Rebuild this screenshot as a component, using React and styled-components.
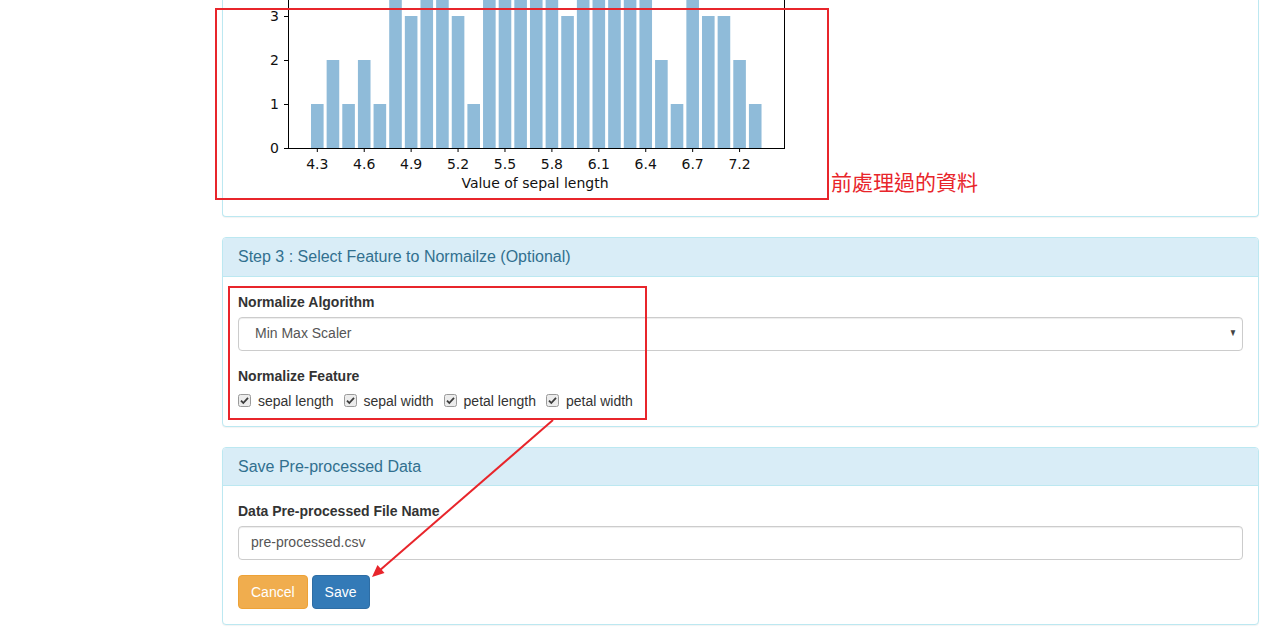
import React from "react";
import styled, { createGlobalStyle } from "styled-components";

const GlobalStyle = createGlobalStyle`
    html, body {
        margin: 0;
        padding: 0;
        background: #fff;
        overflow: hidden;
    }
    body {
        font-family: "Liberation Sans", Arial, Helvetica, sans-serif;
        font-size: 14px;
        line-height: 1.42857;
        color: #333;
    }
    * { box-sizing: border-box; }
`;

const Page = styled.div`
    position: relative;
    width: 1269px;
    height: 638px;
    padding: 0 10px 0 222px;
`;

const Panel = styled.div`
    background: #fff;
    border: 1px solid #bce8f1;
    border-radius: 4px;
    margin-bottom: 20px;
    box-shadow: 0 1px 1px rgba(0, 0, 0, 0.05);
    ${p => p.$cut && `
        border-top: none;
        border-radius: 0 0 4px 4px;
    `}
`;

const PanelHeading = styled.div`
    background: #d9edf7;
    color: #31708f;
    border-bottom: 1px solid #bce8f1;
    border-radius: 3px 3px 0 0;
    padding: 10px 15px;
    font-size: 16px;
    line-height: 1.1;
`;

const PanelBody = styled.div`
    padding: ${p => (p.$cut ? "0 15px 15px" : "15px")};
`;

const FormGroup = styled.div`
    margin-bottom: ${p => (p.$last ? 0 : 15)}px;
`;

const Label = styled.div`
    font-weight: bold;
    margin-bottom: 5px;
    line-height: 20px;
`;

const Field = styled.div`
    display: flex;
    align-items: center;
    justify-content: space-between;
    height: 34px;
    padding: 6px 12px 6px ${p => (p.$select ? 16 : 12)}px;
    border: 1px solid #ccc;
    border-radius: 4px;
    box-shadow: inset 0 1px 1px rgba(0, 0, 0, 0.075);
    color: #555;
    background: #fff;
`;

const Caret = styled.span`
    font-size: 10px;
    color: #444;
    margin-right: -8px;
    transform: scaleX(0.8);
`;

const CheckRow = styled.div`
    display: flex;
    align-items: center;
    height: 20px;
`;

const CheckLabel = styled.label`
    display: flex;
    align-items: center;
    margin-right: 10px;
    line-height: 20px;
    svg {
        margin-right: 7px;
    }
`;

const ButtonRow = styled.div`
    display: flex;
    gap: 4px;
`;

const Button = styled.button`
    font-family: inherit;
    font-size: 14px;
    line-height: 20px;
    height: 34px;
    padding: 6px 12px;
    border-radius: 4px;
    color: #fff;
    border: 1px solid ${p => (p.$variant === "warning" ? "#eea236" : "#2e6da4")};
    background: ${p => (p.$variant === "warning" ? "#f0ad4e" : "#337ab7")};
`;

const Overlay = styled.div`
    position: absolute;
    inset: 0;
    pointer-events: none;
`;

const RedBox = styled.div`
    position: absolute;
    left: ${p => p.$x}px;
    top: ${p => p.$y}px;
    width: ${p => p.$w}px;
    height: ${p => p.$h}px;
    border: 2px solid #e8252b;
`;

const Note = styled.div`
    position: absolute;
    left: 831px;
    top: 171px;
    font-family: "Noto Sans CJK TC", "Noto Sans CJK SC", sans-serif;
    font-size: 21px;
    line-height: 1;
    color: #e8252b;
`;

const ArrowLayer = styled.svg`
    position: absolute;
    left: 0;
    top: 0;
`;

const counts = [1, 2, 1, 2, 1, 5, 3, 6, 5, 3, 1, 5, 6, 5, 7, 6, 3, 5, 5, 4, 6, 5, 2, 1, 6, 3, 3, 2, 1];
const ticks = ["4.3", "4.6", "4.9", "5.2", "5.5", "5.8", "6.1", "6.4", "6.7", "7.2"];

const Chart = () => {
    const base = 148;
    const unit = 44;
    const step = 15.64;
    const barW = 12.6;
    const x0 = 311;
    return (
        <svg width="560" height="201" style={{ display: "block" }}>
            <g transform="translate(-238,0)" fontFamily="'DejaVu Sans', sans-serif" fontSize="14" fill="#111">
                {counts.map((c, i) => (
                    <rect key={i} x={x0 + i * step} y={base - c * unit} width={barW} height={c * unit} fill="#8fbbd9" />
                ))}
                <line x1="288.5" y1="0" x2="288.5" y2={base + 0.5} stroke="#000" strokeWidth="1" />
                <line x1="784.5" y1="0" x2="784.5" y2={base + 0.5} stroke="#000" strokeWidth="1" />
                <line x1="288" y1={base + 0.5} x2="785" y2={base + 0.5} stroke="#000" strokeWidth="1" />
                {[0, 1, 2, 3].map(v => (
                    <g key={v}>
                        <line x1="284" y1={base - v * unit + 0.5} x2="288" y2={base - v * unit + 0.5} stroke="#000" />
                        <text x="279" y={base - v * unit + 5} textAnchor="end">{v}</text>
                    </g>
                ))}
                {ticks.map((t, k) => {
                    const cx = x0 + k * 3 * step + barW / 2;
                    return (
                        <g key={t}>
                            <line x1={cx} y1={base} x2={cx} y2={base + 4} stroke="#000" />
                            <text x={cx} y="169" textAnchor="middle">{t}</text>
                        </g>
                    );
                })}
                <text x="535" y="188" textAnchor="middle">Value of sepal length</text>
            </g>
        </svg>
    );
};

const Check = () => (
    <svg width="13" height="13" viewBox="0 0 13 13">
        <rect x="0.5" y="0.5" width="12" height="12" rx="2" fill="#ececec" stroke="#9a9a9a" />
        <path d="M3 6.6 L5.3 9 L10 3.8" fill="none" stroke="#3c3c3c" strokeWidth="1.8" />
    </svg>
);

const features = ["sepal length", "sepal width", "petal length", "petal width"];

export default function App() {
    return (
        <Page>
            <GlobalStyle />
            <Panel $cut>
                <PanelBody $cut>
                    <Chart />
                </PanelBody>
            </Panel>

            <Panel>
                <PanelHeading>Step 3 : Select Feature to Normailze (Optional)</PanelHeading>
                <PanelBody>
                    <FormGroup>
                        <Label>Normalize Algorithm</Label>
                        <Field $select>
                            <span>Min Max Scaler</span>
                            <Caret>▼</Caret>
                        </Field>
                    </FormGroup>
                    <FormGroup $last>
                        <Label>Normalize Feature</Label>
                        <CheckRow>
                            {features.map(f => (
                                <CheckLabel key={f}>
                                    <Check />
                                    {f}
                                </CheckLabel>
                            ))}
                        </CheckRow>
                    </FormGroup>
                </PanelBody>
            </Panel>

            <Panel>
                <PanelHeading>Save Pre-processed Data</PanelHeading>
                <PanelBody>
                    <FormGroup>
                        <Label>Data Pre-processed File Name</Label>
                        <Field>pre-processed.csv</Field>
                    </FormGroup>
                    <ButtonRow>
                        <Button $variant="warning">Cancel</Button>
                        <Button>Save</Button>
                    </ButtonRow>
                </PanelBody>
            </Panel>

            <Overlay>
                <RedBox $x={215} $y={8} $w={614} $h={192} />
                <Note>前處理過的資料</Note>
                <RedBox $x={228} $y={286} $w={419} $h={134} />
                <ArrowLayer width="1269" height="638">
                    <line x1="553" y1="420" x2="379" y2="571" stroke="#e8252b" strokeWidth="2" />
                    <polygon points="372,577 384.5,573 377.5,565" fill="#e8252b" />
                </ArrowLayer>
            </Overlay>
        </Page>
    );
}
